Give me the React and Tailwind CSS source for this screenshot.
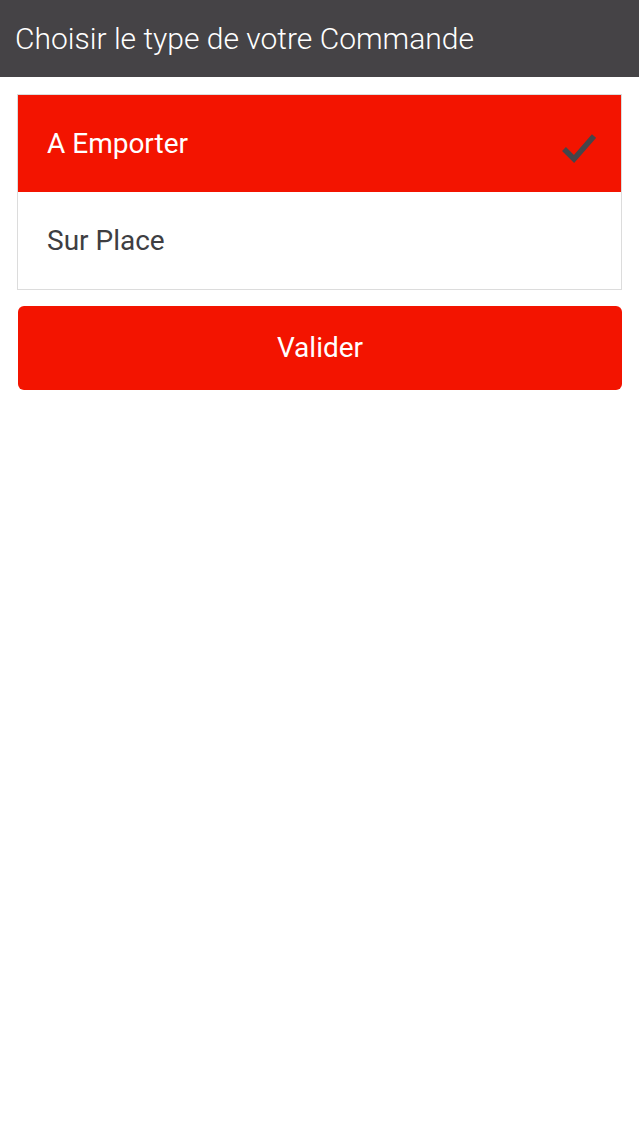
import { useState } from "react";

const OPTIONS = ["A Emporter", "Sur Place"];

export default function App() {
  const [selected, setSelected] = useState(0);

  return (
    <div className="min-h-screen w-[639px] bg-white font-['Roboto',sans-serif]">
      {/* Header */}
      <div className="h-[77px] bg-[#454346] flex items-center pl-[15px]">
        <h1 className="text-[30px] font-light text-white">
          Choisir le type de votre Commande
        </h1>
      </div>

      <div className="px-[17px] pt-[17px]">
        {/* Options list */}
        <div className="border border-[#dcdcdc]">
          {OPTIONS.map((opt, i) => (
            <button
              key={opt}
              onClick={() => setSelected(i)}
              className={
                "w-full h-[97px] flex items-center justify-between pl-[29px] pr-[25px] text-left " +
                (selected === i ? "bg-[#f31400] text-white" : "bg-white text-[#3e3e42]")
              }
            >
              <span className="text-[28px]">{opt}</span>
              {selected === i && (
                <svg width="36" height="40" viewBox="0 0 36 40">
                  <path
                    d="M4 25 L14 35 L34 12"
                    fill="none"
                    stroke="#45454a"
                    strokeWidth="5.5"
                  />
                </svg>
              )}
            </button>
          ))}
        </div>

        {/* Submit */}
        <button className="mt-[16px] w-full h-[84px] mx-[1px] max-w-[604px] rounded-[6px] bg-[#f31400] text-white text-[28px]">
          Valider
        </button>
      </div>
    </div>
  );
}
